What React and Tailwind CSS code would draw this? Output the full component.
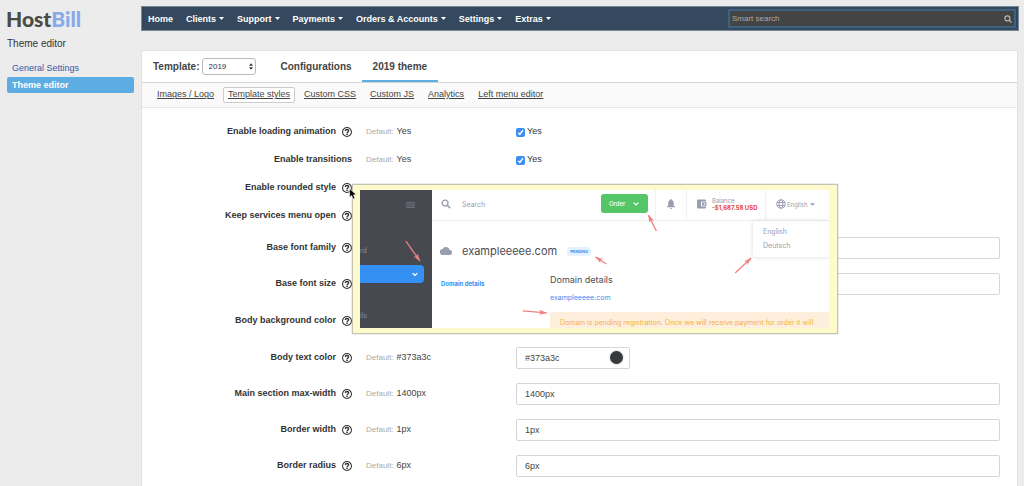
import React from "react";

const NAV = ["Home", "Clients", "Support", "Payments", "Orders & Accounts", "Settings", "Extras"];
const LINKS = ["Images / Logo", "Template styles", "Custom CSS", "Custom JS", "Analytics", "Left menu editor"];

const ROWS = [
  { id: "loading", label: "Enable loading animation", help: true, kind: "check", def: "Yes" },
  { id: "transitions", label: "Enable transitions", kind: "check", def: "Yes" },
  { id: "rounded", label: "Enable rounded style", help: true, kind: "check", def: "Yes", preview: true },
  { id: "services", label: "Keep services menu open", help: true, kind: "check", def: "Yes" },
  { id: "family", label: "Base font family", help: true, kind: "text" },
  { id: "size", label: "Base font size", help: true, kind: "text" },
  { id: "bg", label: "Body background color", help: true, kind: "color" },
  { id: "text", label: "Body text color", help: true, kind: "color", def: "#373a3c" },
  { id: "maxwidth", label: "Main section max-width", help: true, kind: "text", def: "1400px" },
  { id: "bwidth", label: "Border width", help: true, kind: "text", def: "1px" },
  { id: "bradius", label: "Border radius", help: true, kind: "text", def: "6px" },
];

const ROW_HEIGHT = { check: "h-7", text: "h-9", color: "h-[37px]" };

function HelpIcon() {
  return (
    <svg viewBox="0 0 20 20" className="block size-[10px]" fill="none" stroke="#333" aria-hidden="true">
      <circle cx="10" cy="10" r="8.9" strokeWidth="2.1" />
      <path d="M6.7 8c0-2 1.400-3.100 3.300-3.100s3.300 1.100 3.300 2.800c0 2.200-3.200 2.200-3.200 4.600" strokeWidth="2.8" />
      <path d="M10.100 13.400v2.700" strokeWidth="3" />
    </svg>
  );
}

function Chevron({ className }) {
  return (
    <svg viewBox="0 0 10 6" className={className} fill="none" stroke="white" strokeWidth="2" strokeLinecap="round" strokeLinejoin="round" aria-hidden="true">
      <path d="M1.5 1.2 5 4.6l3.500-3.400" />
    </svg>
  );
}

function Arrows() {
  const arrows = [
    [46, 51, 60, 71],
    [297, 41, 289, 25],
    [247, 74, 236, 67],
    [376, 83, 392, 68],
    [163, 121, 187, 123],
  ];
  return (
    <svg viewBox="0 0 470 138" className="pointer-events-none absolute inset-0 size-full" aria-hidden="true">
      {arrows.map(([x1, y1, x2, y2]) => {
        const angle = (Math.atan2(y2 - y1, x2 - x1) * 180) / Math.PI;
        return (
          <g key={x1} stroke="#f08080" fill="#f08080">
            <line x1={x1} y1={y1} x2={x2} y2={y2} strokeWidth="1.3" />
            <path d="M0 0-7-2.200-5.500 0-7 2.200Z" strokeWidth="0.3" transform={`translate(${x2} ${y2}) rotate(${angle})`} />
          </g>
        );
      })}
    </svg>
  );
}

function Preview() {
  return (
    <div role="tooltip" className="absolute top-[10px] left-full z-10 w-[486px] border border-[#c4c4b4] bg-[#fefacb] pt-[5px] pr-2 pb-[5px] pl-[7px] text-left font-['Inter',sans-serif] font-normal shadow-[0_0_1px_#999]">
      <div className="relative flex h-[138px] overflow-hidden bg-white">
        <div className="flex w-[72px] shrink-0 flex-col bg-[#464950] text-[7px] text-[#8b8d98]">
          <div className="flex h-[30px] items-center justify-end pr-[17px]">
            <svg viewBox="0 0 10 8" className="h-2 w-[9px]" stroke="#777a86" strokeWidth="1.1" aria-hidden="true">
              <path d="M0 1.500h10M0 4h10M0 6.500h10" />
            </svg>
          </div>
          <div className="mt-[26px] h-[10px] leading-[10px]">rd</div>
          <div className="mt-[9px] mr-2 flex h-[18px] items-center justify-end rounded-r bg-[#3490f3] pr-[6px]">
            <Chevron className="h-[5px] w-[6px]" />
          </div>
          <div className="mt-7 h-[10px] leading-[10px]">ils</div>
        </div>

        <div className="flex min-w-0 flex-1 flex-col">
          <div className="flex h-[31px] shrink-0 border-b border-[#ececf2] text-[7px] leading-[7px] text-[#9a9cb0]">
            <div className="flex flex-1 items-center pb-[2px] pl-[9px]">
              <svg viewBox="0 0 12 12" className="mr-[11px] size-[10px]" fill="none" stroke="#9a9cb0" strokeWidth="1.600" aria-hidden="true">
                <circle cx="4.900" cy="4.900" r="3.500" />
                <path d="m7.500 7.500 3.500 3.500" strokeWidth="2" />
              </svg>
              Search
            </div>
            <div className="flex items-center pr-[7px]">
              <button type="button" className="mt-[-3px] flex h-[19px] w-[47px] items-center justify-between rounded-[3px] bg-[#54c668] pr-[9px] pl-2 text-[6px] font-medium text-white">
                Order
                <Chevron className="h-1 w-[6px]" />
              </button>
            </div>
            <div className="flex w-[31px] items-center justify-center border-l border-[#f0f0f5]">
              <svg viewBox="0 0 16 20" className="mb-[2px] h-[10px] w-2" fill="#9a9cb0" aria-hidden="true">
                <path d="M8 0a1.500 1.500 0 0 1 1.500 1.500v.7C12 3 13.500 5.200 13.500 8v5l2.500 2.500v1.200H0v-1.200L2.500 13V8C2.500 5.200 4 3 6.500 2.200v-.7A1.500 1.500 0 0 1 8 0ZM6 18h4a2 2 0 0 1-4 0Z" />
              </svg>
            </div>
            <div className="flex w-[79px] items-center border-l border-[#f0f0f5] pb-[2px] pl-[10px]">
              <svg viewBox="0 0 20 20" className="mr-[5px] size-[10px] shrink-0" aria-hidden="true">
                <path fill="#9a9cb0" fillRule="evenodd" d="M2 1h14a2 2 0 0 1 2 2v2h-8a2 2 0 0 0-2 2v6a2 2 0 0 0 2 2h8v2a2 2 0 0 1-2 2H2a2 2 0 0 1-2-2V3a2 2 0 0 1 2-2Zm8 5.500h9v7h-9Zm3.500 2v3h2.500v-3Z" />
              </svg>
              <div className="text-[6px]">
                <div>Balance</div>
                <div className="font-bold whitespace-nowrap text-[#e8433c]">-$1,687.58 USD</div>
              </div>
            </div>
            <div className="relative flex w-[64px] items-center border-l border-[#f0f0f5] pb-[2px] pl-[10px] text-[6px]">
              <svg viewBox="0 0 20 20" className="mr-[1px] size-[10px] shrink-0" fill="none" stroke="#9a9cb0" strokeWidth="1.900" aria-hidden="true">
                <circle cx="10" cy="10" r="8.500" />
                <ellipse cx="10" cy="10" rx="3.800" ry="8.500" />
                <path d="M2 7h16M2 13h16" />
              </svg>
              English
              <svg viewBox="0 0 10 5" className="ml-[3px] h-[3px] w-[5px]" fill="#9a9cb0" aria-hidden="true">
                <path d="M0 0h10L5 5Z" />
              </svg>
              <div className="absolute top-[31px] right-0 w-[76px] rounded-[3px] bg-white py-1 pl-[10px] text-[7px] leading-[14px] shadow-[0_0_4px_#d8d8e0]">
                <div>English</div>
                <div>Deutsch</div>
              </div>
            </div>
          </div>

          <div className="flex items-center pt-[21px] pl-2">
            <svg viewBox="0 0 24 16" className="mr-[10px] h-2 w-3" fill="#9a9cb0" aria-hidden="true">
              <path d="M19.400 6A7.500 7.500 0 0 0 5.400 4 6 6 0 0 0 6 16h13a5 5 0 0 0 .4-10Z" />
            </svg>
            <span className="text-[11px] leading-[18px] text-[#4a4c55]">exampleeeee.com</span>
            <span className="ml-[10px] rounded-[3px] bg-[#e4f1fe] px-[3px] text-[4px] leading-[9px] font-bold text-[#3490f3]">PENDING</span>
          </div>

          <div className="flex pt-[13px]">
            <div className="w-[118px] shrink-0 pt-[6px] pl-[9px] text-[6px] leading-[10px] font-bold text-[#3490f3]">Domain details</div>
            <div className="min-w-0 flex-1">
              <div className="text-[9px] leading-[14px] text-[#4a4c55]">Domain details</div>
              <div className="mt-1 text-[7px] leading-[14px] text-[#3490f3]">exampleeeee.com</div>
              <div className="mt-[7px] h-5 rounded-tl-[3px] bg-[#fdefdc] pl-[10px] text-[7px] leading-[22px] whitespace-nowrap text-[#f6b143]">
                Domain is pending registration. Once we will receive payment for order it will
              </div>
            </div>
          </div>
        </div>
        <Arrows />
      </div>
    </div>
  );
}

function Control({ row }) {
  if (row.kind === "check") {
    return (
      <label className="flex items-center gap-[2px] text-[9px] text-[#333]">
        <span className="relative block size-[9px]">
          <input id={row.id} type="checkbox" defaultChecked className="block size-full appearance-none rounded-[2px] bg-[#3b8ff2]" />
          <svg viewBox="0 0 8 8" className="pointer-events-none absolute inset-0 size-full" fill="none" stroke="white" strokeWidth="1.200" aria-hidden="true">
            <path d="m2 4.200 1.400 1.600L6.200 2" />
          </svg>
        </span>
        Yes
      </label>
    );
  }
  const box = "block h-[22px] w-full rounded-[2px] border border-[#d6d6d6] bg-white px-2 text-[9px] text-[#444] outline-none";
  if (row.kind === "color") {
    return (
      <div className="relative w-[114px]">
        <input id={row.id} type="text" defaultValue={row.def} className={box} />
        {row.def && <span className="absolute top-1 right-[7px] size-[13px] rounded-full bg-[#373a3c] shadow-[0_0_2px_#aaa]" />}
      </div>
    );
  }
  return <input id={row.id} type="text" defaultValue={row.def} className={box} />;
}

function Row({ row }) {
  return (
    <div className={`grid grid-cols-[210px_136px_1fr] items-center gap-x-[14px] pr-[17px] ${ROW_HEIGHT[row.kind]}`}>
      <div className="flex h-full items-center justify-end gap-[6px]">
        <label htmlFor={row.id} className="text-[9px] font-bold text-[#333]">{row.label}</label>
        {row.help && (
          <span className="relative flex h-full items-center">
            <button type="button" aria-label={`Help: ${row.label}`} className="block">
              <HelpIcon />
            </button>
            {row.preview && <Preview />}
            {row.preview && (
              <svg viewBox="0 0 12 18" className="absolute top-[14px] left-[7px] z-20 h-3 w-2" aria-hidden="true">
                <path d="M1 1v13l3-2.800 2.200 5.200 2.600-1.100L6.600 10.200H11Z" fill="black" stroke="white" strokeWidth="0.800" />
              </svg>
            )}
          </span>
        )}
      </div>
      <div className="flex items-baseline gap-[3px] text-[8px] text-[#aaa]">
        {row.def && (
          <>
            <span>Default:</span>
            <span className="text-[9px] text-[#444]">{row.def}</span>
          </>
        )}
      </div>
      <Control row={row} />
    </div>
  );
}

export default function App() {
  return (
    <div className="flex min-h-screen bg-[#ececec] font-['Liberation_Sans',Arial,sans-serif] text-[#333]">
      <aside className="w-[141px] shrink-0 pt-[7px] pr-[7px] pl-[7px]">
        <div className="-ml-px font-['Lato',sans-serif] text-[21px] leading-6 font-black text-[#4a4b43]">
          Host<span className="text-[#86aaea]">Bill</span>
        </div>
        <h1 className="mt-[6px] text-[10px] leading-[14px]">Theme editor</h1>
        <nav className="mt-[9px] text-[9px] leading-4">
          <a href="#general" className="block px-[5px] text-[#3a56a5]">General Settings</a>
          <a href="#editor" className="mt-px block rounded-[2px] bg-[#5dade2] px-[5px] font-bold text-white">Theme editor</a>
        </nav>
      </aside>

      <main className="flex min-w-0 flex-1 flex-col pt-[6px] pr-[5px]">
        <header className="flex h-[25px] items-center justify-between border border-[#76879a] bg-[#34495e] pr-[2px] pl-[6px]">
          <nav className="flex gap-[13px] pt-[2px] text-[9px] font-bold text-white">
            {NAV.map((n, i) => (
              <a key={n} href="#nav" className="flex items-center gap-[3px]">
                {n}
                {i > 0 && (
                  <svg viewBox="0 0 10 6" className="mb-[2px] h-[3px] w-[5px]" fill="white" aria-hidden="true">
                    <path d="M0 0h10L5 6Z" />
                  </svg>
                )}
              </a>
            ))}
          </nav>
          <div className="flex h-[19px] w-[288px] items-center border-2 border-[#3d6282] bg-[#444] pr-[2px] pl-[2px]">
            <input type="search" aria-label="Smart search" placeholder="Smart search" className="min-w-0 flex-1 bg-transparent text-[8px] text-white outline-none placeholder:text-[#aaa]" />
            <button type="button" aria-label="Search">
              <svg viewBox="0 0 16 16" className="size-2" fill="none" stroke="#bbb" strokeWidth="2.200" aria-hidden="true">
                <circle cx="6.800" cy="6.800" r="5" />
                <path d="m10.500 10.500 4.500 4.500" />
              </svg>
            </button>
          </div>
        </header>

        <section className="mt-[19px] mr-px flex-1 rounded-t-[2px] border-x border-t border-[#e2e2e2] bg-white">
          <div className="flex h-8 items-stretch border-b border-[#d5d5d5] pl-[11px] text-[10px] font-bold text-[#444]">
            <label htmlFor="template" className="self-center">Template:</label>
            <div className="relative ml-[2px] self-center">
              <select id="template" defaultValue="2019" className="block h-[17px] w-[54px] appearance-none rounded-[3px] border border-[#bbb] bg-white pl-[6px] text-[8px] font-normal text-[#333]">
                <option>2019</option>
              </select>
              <svg viewBox="0 0 6 10" className="pointer-events-none absolute top-[5px] right-[3px] h-[7px] w-[4px]" fill="#333" aria-hidden="true">
                <path d="M3 0 6 4H0ZM3 10 0 6h6Z" />
              </svg>
            </div>
            <a href="#config" className="ml-[15px] flex items-center px-[10px]">Configurations</a>
            <a href="#theme" className="flex items-center border-b-2 border-[#5dade2] px-[11px] pt-[2px]">2019 theme</a>
          </div>
          <nav className="flex h-[25px] items-center gap-1 border-b border-[#e8e8e8] bg-[#fafafa] pl-[10px] text-[9px] text-[#444] underline">
            {LINKS.map((l, i) => (
              <a
                key={l}
                href="#section"
                className={`flex h-4 items-center rounded-[2px] border px-1 ${i === 1 ? "border-[#ccc] bg-white" : "border-transparent"}`}
              >
                {l}
              </a>
            ))}
          </nav>
          <form className="pt-[10px]">
            {ROWS.map((r) => (
              <Row key={r.id} row={r} />
            ))}
          </form>
        </section>
      </main>
    </div>
  );
}
